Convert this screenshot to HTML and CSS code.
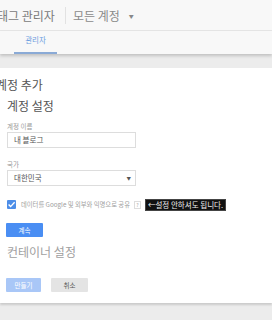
FILE: index.html
```html
<!DOCTYPE html>
<html>
<head>
    <title>태그 관리자</title>
    <link rel="stylesheet" href="styles.css">
</head>
<body>
    <header class="topbar">
        <span class="brand">태그 관리자</span>
        <span class="sep"></span>
        <span class="account">모든 계정</span>
        <span class="caret">▼</span>
    </header>
    <nav class="tabs">
        <span class="tab active">관리자</span>
    </nav>

    <main class="stage">
        <section class="card">
            <h2 class="card-title">계정 추가</h2>
            <h3 class="step">계정 설정</h3>

            <label class="field-label">계정 이름</label>
            <div class="input">내 블로그</div>

            <label class="field-label">국가</label>
            <div class="input select">대한민국<span class="arrow">▼</span></div>

            <div class="share">
                <span class="checkbox">
                    <svg width="9" height="9" viewBox="0 0 9 9"><path d="M1.6 4.6 L3.6 6.6 L7.6 2.2" fill="none" stroke="#fff" stroke-width="1.4"/></svg>
                </span>
                <span class="share-text">데이터를 Google 및 외부와 익명으로 공유</span>
                <span class="help">?</span>
                <span class="note">←설정 안하셔도 됩니다.</span>
            </div>

            <button class="btn primary">계속</button>

            <h3 class="step muted">컨테이너 설정</h3>

            <div class="actions">
                <button class="btn disabled">만들기</button>
                <button class="btn cancel">취소</button>
            </div>
        </section>
    </main>
</body>
</html>
```

FILE: styles.css
```css
body { margin: 0; font-family: "Noto Sans CJK KR", "Noto Sans", sans-serif; background: #ececec; color: #444; }

.topbar { height: 30px; background: #f8f8f8; border-bottom: 1px solid #e6e6e6; display: flex; align-items: center; }
.brand { font-size: 12px; color: #7a7a7a; margin-left: -3px; }
.sep { width: 1px; height: 17px; background: #e2e2e2; margin: 0 7px 0 10px; }
.account { font-size: 12px; color: #8a8a8a; }
.caret { font-size: 5px; color: #888; margin-left: 9px; }

.tabs { height: 23px; background: #f8f8f8; box-shadow: 0 2px 3px rgba(0,0,0,0.18); position: relative; display: flex; align-items: flex-end; }
.tab { font-size: 7.5px; color: #6d9de0; width: 43px; margin-left: 14px; text-align: center; padding-bottom: 5px; border-bottom: 2px solid #8aaad6; line-height: 14px; }

.stage { padding-top: 14px; padding-bottom: 20px; }
.card { background: #fff; height: 235px; padding: 0 7px; box-shadow: 0 2px 2px rgba(0,0,0,0.14); }

.card-title { margin: 0 0 0 -11px; padding-top: 9px; font-size: 12px; font-weight: normal; color: #555; line-height: 16px; }
.step { margin: 5px 0 0; font-size: 12px; font-weight: normal; color: #555; line-height: 16px; }
.step.muted { color: #a0a0a0; margin-top: 7px; }

.field-label { display: block; font-size: 6.5px; color: #999; margin-top: 7px; line-height: 10px; }
.input { height: 14px; border: 1px solid #ddd; margin-top: 1px; font-size: 7.5px; color: #555; padding-left: 6px; line-height: 14px; box-sizing: content-box; width: 121px; }
.select { position: relative; }
.arrow { position: absolute; right: 4px; top: 0; font-size: 4.5px; color: #555; }
.input + .field-label { margin-top: 11px; }

.share { display: flex; align-items: center; margin-top: 13px; height: 11px; }
.checkbox { width: 9px; height: 9px; background: #4d8ee8; border-radius: 1px; display: flex; }
.share-text { font-size: 6.3px; color: #a0a0a0; margin-left: 5px; }
.help { font-size: 5px; color: #aaa; border: 1px solid #ddd; width: 5px; height: 6px; line-height: 6px; text-align: center; margin-left: 4px; }
.note { background: #111; color: #eee; font-size: 7.5px; margin-left: 4px; padding: 0 2px; height: 10px; line-height: 10px; border: 1px solid #444; }

.btn { font-family: inherit; border: none; font-size: 6.5px; height: 14px; width: 37px; border-radius: 1px; padding: 0; }
.primary { background: #4a8ef3; color: #fff; margin-top: 13px; display: block; margin-left: -1px; }
.actions { display: flex; gap: 10px; margin-top: 18px; margin-left: -1px; }
.disabled { background: #a9c7f7; color: #fff; width: 35px; }
.cancel { background: #e4e4e4; color: #555; }
```
